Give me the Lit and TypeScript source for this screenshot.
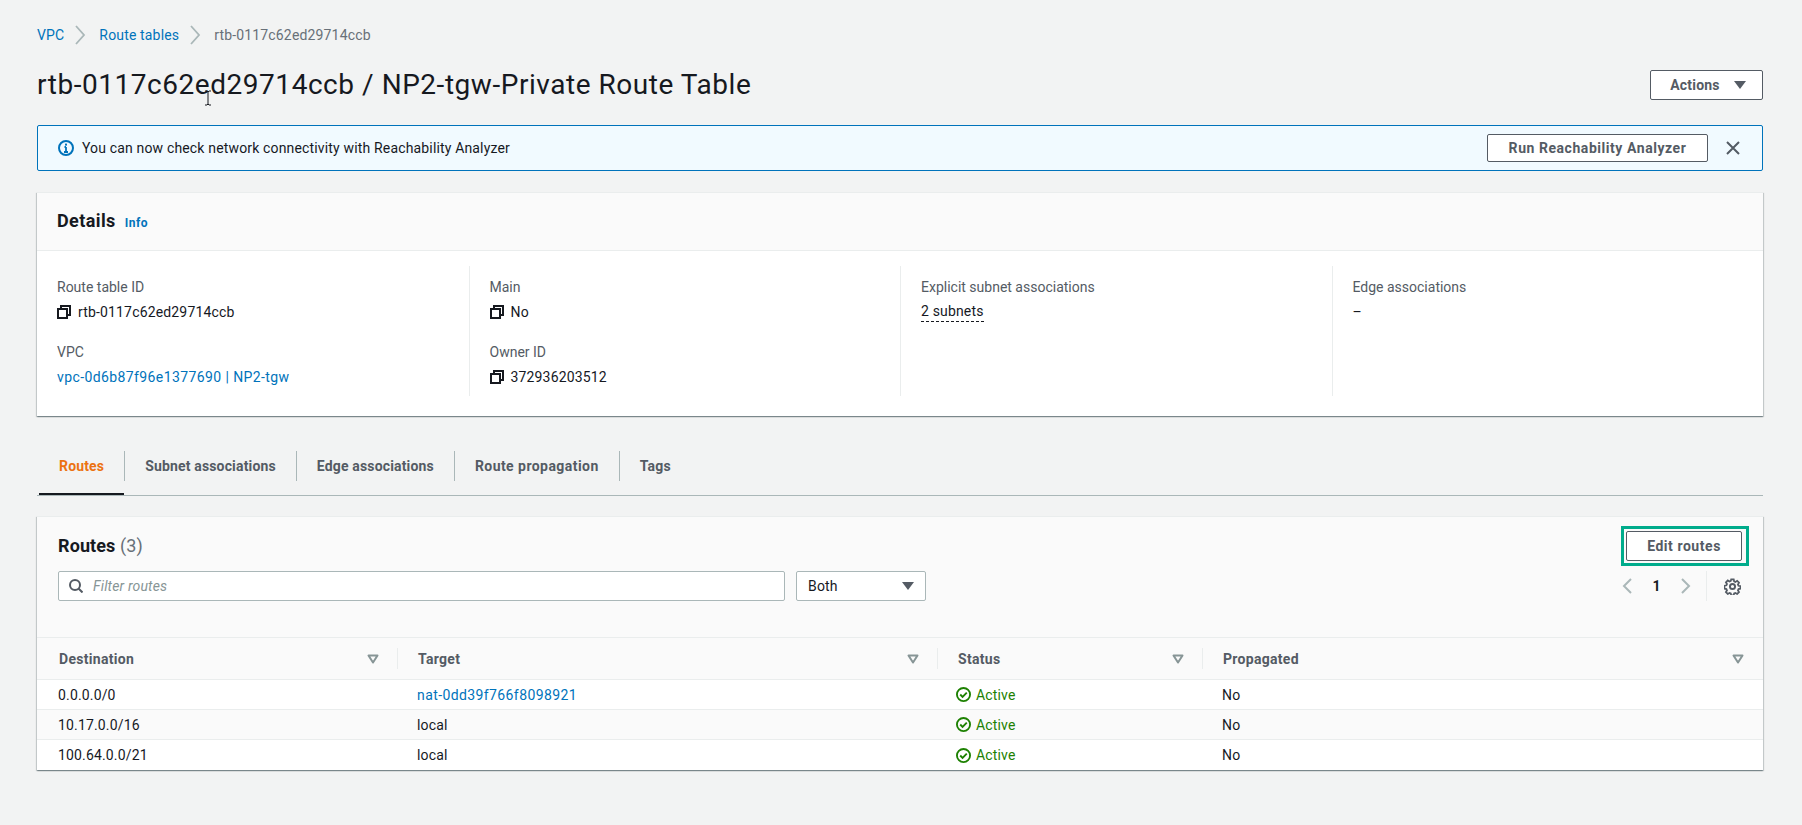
import { LitElement, html, css, svg } from 'lit';
import { customElement } from 'lit/decorators.js';

const chevron = html`<svg class="crumb-sep" viewBox="0 0 12 22"><path d="M2 2l8 9-8 9" fill="none" stroke="#aab7b8" stroke-width="1.8"/></svg>`;
const copyIcon = html`<svg class="copy" viewBox="0 0 14 14" fill="none" stroke="#16191f" stroke-width="2"><path d="M4 4V1h9v9h-3"/><rect x="1" y="4" width="9" height="9"/></svg>`;
const sortIcon = html`<svg class="sort" viewBox="0 0 12 10"><path d="M1.5 1.5h9L6 8.5z" fill="none" stroke="#879596" stroke-width="2" stroke-linejoin="round"/></svg>`;
const activeIcon = html`<svg class="ok" viewBox="0 0 16 16" fill="none" stroke="#1d8102" stroke-width="2"><circle cx="8" cy="8" r="7"/><path d="M4.5 8l2.5 2.5 4.5-4.5"/></svg>`;

const gearPath = svg`<path d="M6.7 1.2h2.6l.4 2 1.3.6 1.8-1.1 1.9 1.9-1.1 1.8.6 1.3 2 .4v2.6l-2 .4-.6 1.3 1.1 1.8-1.9 1.9-1.8-1.1-1.3.6-.4 2H6.7l-.4-2-1.3-.6-1.8 1.1-1.9-1.9 1.1-1.8-.6-1.3-2-.4V7.7l2-.4.6-1.3-1.1-1.8 1.9-1.9 1.8 1.1 1.3-.6z" transform="translate(.6 .2) scale(.92)"/>`;

const routes = [
  { dest: '0.0.0.0/0', target: 'nat-0dd39f766f8098921', link: true },
  { dest: '10.17.0.0/16', target: 'local', link: false },
  { dest: '100.64.0.0/21', target: 'local', link: false },
];

@customElement('app-root')
export class AppRoot extends LitElement {
  static styles = css`
    :host {
      display: block;
      min-height: 825px;
      background: #f2f3f3;
      color: #16191f;
      font-family: "Roboto", "Noto Sans", sans-serif;
      font-size: 14px;
      line-height: 22px;
      letter-spacing: 0.16px;
    }
    .page {
      padding: 24px 39px 0 37px;
    }
    a {
      color: #0073bb;
      text-decoration: none;
    }
    .id-link {
      letter-spacing: 0.4px;
    }
    button {
      font: inherit;
      font-weight: 700;
      letter-spacing: 0.55px;
      color: #545b64;
      background: #fff;
      border: 1px solid #545b64;
      border-radius: 2px;
      padding: 0;
      display: flex;
      align-items: center;
      justify-content: center;
    }
    .crumbs {
      display: flex;
      align-items: center;
      height: 22px;
    }
    .crumbs span {
      color: #687078;
    }
    .crumb-sep {
      width: 12px;
      height: 22px;
      margin: 0 13px 0 10px;
    }
    .title-row {
      display: flex;
      justify-content: space-between;
      align-items: center;
      margin-top: 24px;
      position: relative;
    }
    h1 {
      margin: 0;
      font-size: 28px;
      line-height: 30px;
      font-weight: 400;
      letter-spacing: 0.54px;
    }
    .cursor {
      position: absolute;
      left: 167px;
      top: 20px;
      width: 8px;
      height: 16px;
    }
    .actions {
      width: 113px;
      height: 30px;
      gap: 14px;
      padding-left: 3px;
      letter-spacing: 0.2px;
    }
    .caret {
      width: 12px;
      height: 8px;
      fill: #545b64;
    }
    .alert {
      display: flex;
      align-items: center;
      height: 46px;
      box-sizing: border-box;
      margin-top: 25px;
      padding: 0 20px 0 20px;
      background: #f1faff;
      border: 1px solid #0073bb;
      border-radius: 2px;
    }
    .alert .info {
      width: 16px;
      height: 16px;
      margin-right: 8px;
    }
    .alert .msg {
      flex: 1;
    }
    .run {
      width: 221px;
      height: 28px;
    }
    .close {
      width: 14px;
      height: 14px;
      margin-left: 18px;
      margin-right: 2px;
    }
    .card {
      background: #fff;
      border-top: 1px solid #eaeded;
      box-shadow: 0 1px 1px 0 rgba(0, 28, 36, 0.3), 1px 1px 1px 0 rgba(0, 28, 36, 0.15), -1px 1px 1px 0 rgba(0, 28, 36, 0.15);
    }
    .details {
      margin-top: 21px;
    }
    .details-head {
      height: 58px;
      box-sizing: border-box;
      display: flex;
      align-items: center;
      gap: 9px;
      padding: 0 20px 1px;
      background: #fafafa;
      border-bottom: 1px solid #eaeded;
    }
    h2 {
      margin: 0;
      font-size: 18px;
      line-height: 22px;
      font-weight: 700;
      letter-spacing: 0.4px;
    }
    .info-link {
      font-size: 12px;
      font-weight: 700;
      letter-spacing: 0.5px;
      margin-top: 4px;
    }
    .cols {
      display: grid;
      grid-template-columns: repeat(4, 1fr);
      padding: 15px 0 20px;
    }
    .col {
      padding: 10px 20px 8px;
      height: 130px;
      box-sizing: border-box;
    }
    .col + .col {
      border-left: 1px solid #eaeded;
    }
    .label {
      color: #545b64;
      margin-bottom: 3px;
      letter-spacing: 0;
    }
    .value {
      display: flex;
      align-items: center;
      gap: 7px;
    }
    .pair + .pair {
      margin-top: 18px;
    }
    .copy {
      width: 14px;
      height: 14px;
    }
    .dotted {
      border-bottom: 1px dashed #16191f;
      line-height: 20px;
    }
    .tabs {
      display: flex;
      margin-top: 35px;
      height: 45px;
      box-sizing: border-box;
      border-bottom: 1px solid #aab7b8;
    }
    .tab {
      height: 44px;
      box-sizing: border-box;
      position: relative;
      padding: 4px 20px 0 21px;
      font-weight: 700;
      color: #545b64;
    }
    .tab .in {
      display: block;
      line-height: 22px;
    }
    .tab.wide {
      letter-spacing: 0.45px;
    }
    .tab:not(:first-child)::before {
      content: "";
      position: absolute;
      left: 0;
      top: 0;
      bottom: 14px;
      width: 1px;
      background: #aab7b8;
    }
    .tab.on {
      color: #ec7211;
      border-bottom: 2px solid #16191f;
      margin-left: 2px;
      padding: 4px 20px 0;
    }
    .routes {
      margin-top: 20px;
      background: #fff;
    }
    .routes-top {
      height: 120px;
      box-sizing: border-box;
      background: #fafafa;
      padding: 14px 21px 0 21px;
      position: relative;
    }
    .routes-title {
      display: flex;
      justify-content: space-between;
      align-items: center;
      height: 30px;
    }
    h2.small {
      letter-spacing: 0.1px;
    }
    h2.small span {
      font-weight: 400;
      color: #687078;
    }
    .edit-wrap {
      position: relative;
    }
    .edit {
      width: 116px;
      height: 30px;
    }
    .mark {
      position: absolute;
      inset: -5px -7px -5px -5px;
      border: 3px solid #00ac8c;
      pointer-events: none;
    }
    .tools {
      display: flex;
      align-items: center;
      margin-top: 10px;
      height: 30px;
    }
    .filter {
      width: 727px;
      height: 30px;
      box-sizing: border-box;
      display: flex;
      align-items: center;
      gap: 10px;
      padding-left: 10px;
      background: #fff;
      border: 1px solid #aab7b8;
      border-radius: 2px;
      color: #879596;
      font-style: italic;
    }
    .filter svg {
      width: 14px;
      height: 14px;
      flex: none;
    }
    .select {
      width: 130px;
      height: 30px;
      box-sizing: border-box;
      margin-left: 11px;
      padding: 0 11px;
      display: flex;
      align-items: center;
      justify-content: space-between;
      background: #fff;
      border: 1px solid #aab7b8;
      border-radius: 2px;
    }
    .pager {
      margin-left: auto;
      display: flex;
      align-items: center;
      height: 30px;
    }
    .pager .chev {
      width: 10px;
      height: 16px;
    }
    .pager b {
      width: 49px;
      text-align: center;
      font-weight: 700;
    }
    .pager .sep {
      width: 1px;
      height: 30px;
      background: #eaeded;
      margin: 0 17px 0 15px;
    }
    .gear {
      width: 17px;
      height: 17px;
      margin-right: 1px;
    }
    .row {
      display: grid;
      grid-template-columns: 360px 540px 265px 1fr;
      height: 30px;
      box-sizing: border-box;
      border-bottom: 1px solid #eaeded;
      align-items: center;
    }
    .row:nth-child(even) {
      background: #fafafa;
    }
    .row:last-child {
      border-bottom: none;
    }
    .row > div {
      padding-left: 21px;
    }
    .row > div + div {
      padding-left: 20px;
    }
    .head {
      display: grid;
      grid-template-columns: 360px 540px 265px 1fr;
      height: 43px;
      box-sizing: border-box;
      background: #fafafa;
      border-top: 1px solid #eaeded;
      border-bottom: 1px solid #eaeded;
      align-items: center;
      font-weight: 700;
      color: #545b64;
      letter-spacing: 0.3px;
    }
    .head > div {
      height: 21px;
      display: flex;
      align-items: center;
      justify-content: space-between;
      box-sizing: border-box;
      padding: 0 18px 0 20px;
      border-left: 1px solid #eaeded;
    }
    .head > div:first-child {
      border-left: none;
      padding-left: 22px;
    }
    .head > div:last-child {
      padding-right: 19px;
    }
    .sort {
      width: 12px;
      height: 10px;
    }
    .status {
      display: flex;
      align-items: center;
      gap: 5px;
      color: #1d8102;
      margin-left: -1px;
    }
    .ok {
      width: 15px;
      height: 15px;
    }
  `;

  private renderPair(label: string, value: unknown) {
    return html`<div class="pair"><div class="label">${label}</div><div class="value">${value}</div></div>`;
  }

  render() {
    return html`
      <div class="page">
        <nav class="crumbs">
          <a href="#">VPC</a>${chevron}<a href="#">Route tables</a>${chevron}<span>rtb-0117c62ed29714ccb</span>
        </nav>

        <div class="title-row">
          <h1>rtb-0117c62ed29714ccb / NP2-tgw-Private Route Table</h1>
          <svg class="cursor" viewBox="0 0 8 16"><path d="M1 1h2l1 1 1-1h2M4 2v12M1 15h2l1-1 1 1h2" fill="none" stroke="#16191f"/></svg>
          <button class="actions">Actions
            <svg class="caret" viewBox="0 0 12 8"><path d="M0 0h12L6 8z"/></svg>
          </button>
        </div>

        <div class="alert">
          <svg class="info" viewBox="0 0 16 16"><circle cx="8" cy="8" r="7" fill="none" stroke="#0073bb" stroke-width="2"/><path d="M8 7v5M6 12h4M6.5 7H8" fill="none" stroke="#0073bb" stroke-width="1.8"/><rect x="7" y="3.6" width="2" height="2" fill="#0073bb"/></svg>
          <div class="msg">You can now check network connectivity with Reachability Analyzer</div>
          <button class="run">Run Reachability Analyzer</button>
          <svg class="close" viewBox="0 0 14 14"><path d="M1 1l12 12M13 1L1 13" fill="none" stroke="#545b64" stroke-width="2"/></svg>
        </div>

        <section class="card details">
          <div class="details-head"><h2>Details</h2><a class="info-link" href="#">Info</a></div>
          <div class="cols">
            <div class="col">
              ${this.renderPair('Route table ID', html`${copyIcon}rtb-0117c62ed29714ccb`)}
              ${this.renderPair('VPC', html`<a class="id-link" href="#">vpc-0d6b87f96e1377690 | NP2-tgw</a>`)}
            </div>
            <div class="col">
              ${this.renderPair('Main', html`${copyIcon}No`)}
              ${this.renderPair('Owner ID', html`${copyIcon}372936203512`)}
            </div>
            <div class="col">
              ${this.renderPair('Explicit subnet associations', html`<span class="dotted">2 subnets</span>`)}
            </div>
            <div class="col">
              ${this.renderPair('Edge associations', '–')}
            </div>
          </div>
        </section>

        <div class="tabs">
          <div class="tab on"><span class="in">Routes</span></div>
          <div class="tab"><span class="in">Subnet associations</span></div>
          <div class="tab"><span class="in">Edge associations</span></div>
          <div class="tab wide"><span class="in">Route propagation</span></div>
          <div class="tab"><span class="in">Tags</span></div>
        </div>

        <section class="card routes">
          <div class="routes-top">
            <div class="routes-title">
              <h2 class="small">Routes <span>(3)</span></h2>
              <div class="edit-wrap">
                <button class="edit">Edit routes</button>
                <div class="mark"></div>
              </div>
            </div>
            <div class="tools">
              <div class="filter">
                <svg viewBox="0 0 14 14" fill="none" stroke="#545b64" stroke-width="2"><circle cx="6" cy="6" r="5"/><path d="M9.5 9.5L13.5 13.5"/></svg>
                Filter routes
              </div>
              <div class="select">Both
                <svg class="caret" viewBox="0 0 12 8"><path d="M0 0h12L6 8z"/></svg>
              </div>
              <div class="pager">
                <svg class="chev" viewBox="0 0 10 16"><path d="M9 1L2 8l7 7" fill="none" stroke="#aab7b8" stroke-width="2"/></svg>
                <b>1</b>
                <svg class="chev" viewBox="0 0 10 16"><path d="M1 1l7 7-7 7" fill="none" stroke="#aab7b8" stroke-width="2"/></svg>
                <div class="sep"></div>
                <svg class="gear" viewBox="0 0 16 16" fill="none" stroke="#545b64" stroke-width="1.8">${gearPath}<circle cx="8" cy="8" r="2.4"/></svg>
              </div>
            </div>
          </div>
          <div class="head">
            <div>Destination ${sortIcon}</div>
            <div>Target ${sortIcon}</div>
            <div>Status ${sortIcon}</div>
            <div>Propagated ${sortIcon}</div>
          </div>
          <div>
            ${routes.map(
              (r) => html`
                <div class="row">
                  <div>${r.dest}</div>
                  <div>${r.link ? html`<a class="id-link" href="#">${r.target}</a>` : r.target}</div>
                  <div><span class="status">${activeIcon}Active</span></div>
                  <div>No</div>
                </div>
              `
            )}
          </div>
        </section>
      </div>
    `;
  }
}
